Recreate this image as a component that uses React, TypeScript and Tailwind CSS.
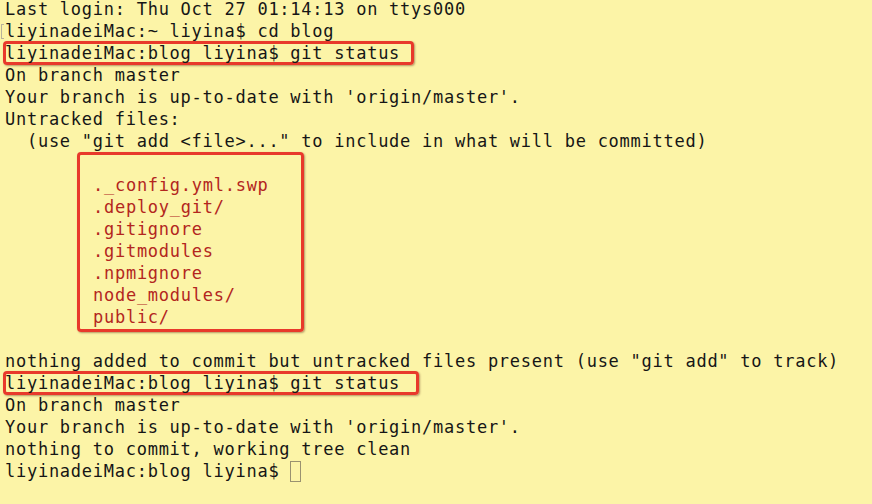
const head: string[] = [
  'Last login: Thu Oct 27 01:14:13 on ttys000',
];

const status: string[] = [
  'On branch master',
  "Your branch is up-to-date with 'origin/master'.",
  'Untracked files:',
  '  (use "git add <file>..." to include in what will be committed)',
];

const untracked = [
  '._config.yml.swp',
  '.deploy_git/',
  '.gitignore',
  '.gitmodules',
  '.npmignore',
  'node_modules/',
  'public/',
];

const tail: string[] = [
  'On branch master',
  "Your branch is up-to-date with 'origin/master'.",
  'nothing to commit, working tree clean',
];

const boxCls =
  'box-border rounded-[4px] border-[3px] border-[#e8392b] shadow-[1px_1px_2px_rgba(90,40,20,0.45)]';

function Line({ text }: { text: string }) {
  return <div className="h-[22px] whitespace-pre">{text || ' '}</div>;
}

// a command line wrapped in a red annotation box
function BoxedLine({ text, width }: { text: string; width: string }) {
  return (
    <div className={`-my-[1px] -ml-[2px] h-[24px] leading-[18px] whitespace-pre ${width} ${boxCls}`}>
      <span className="-ml-[1px]">{text}</span>
    </div>
  );
}

export default function App() {
  return (
    <div className="h-[504px] w-[872px] overflow-hidden bg-[#fcf4a7] text-[#161616]">
      <div className="-mt-[2px] pl-[5px] font-['DejaVu_Sans_Mono',monospace] text-[17px] leading-[22px] tracking-[0.74px]">
        {head.map((l, i) => (
          <Line key={'h' + i} text={l} />
        ))}
        <div className="flex h-[22px] items-center whitespace-pre">
          <span className="-ml-[4px] mr-[1px] h-[15px] w-[3px] border-y border-l border-[#b9b39a]" />
          <span>liyinadeiMac:~ liyina$ cd blog</span>
        </div>
        <BoxedLine text="liyinadeiMac:blog liyina$ git status" width="w-[411px]" />
        {status.map((l, i) => (
          <Line key={'s' + i} text={l} />
        ))}

        <div className={`-mb-[4px] ml-[72px] h-[180px] w-[227px] pt-[19px] pl-[13px] text-[#b3261e] ${boxCls}`}>
          {untracked.map((f) => (
            <div key={f} className="h-[22px] whitespace-pre">
              {f}
            </div>
          ))}
        </div>

        <Line text="" />
        <Line text='nothing added to commit but untracked files present (use "git add" to track)' />
        <BoxedLine text="liyinadeiMac:blog liyina$ git status" width="w-[416px]" />
        {tail.map((l, i) => (
          <Line key={'t' + i} text={l} />
        ))}
        <div className="flex h-[22px] items-center whitespace-pre">
          <span>{'liyinadeiMac:blog liyina$ '}</span>
          <span className="mt-[1px] inline-block h-[21px] w-[11px] border-[1.5px] border-[#9a9270]" />
        </div>
      </div>
    </div>
  );
}
